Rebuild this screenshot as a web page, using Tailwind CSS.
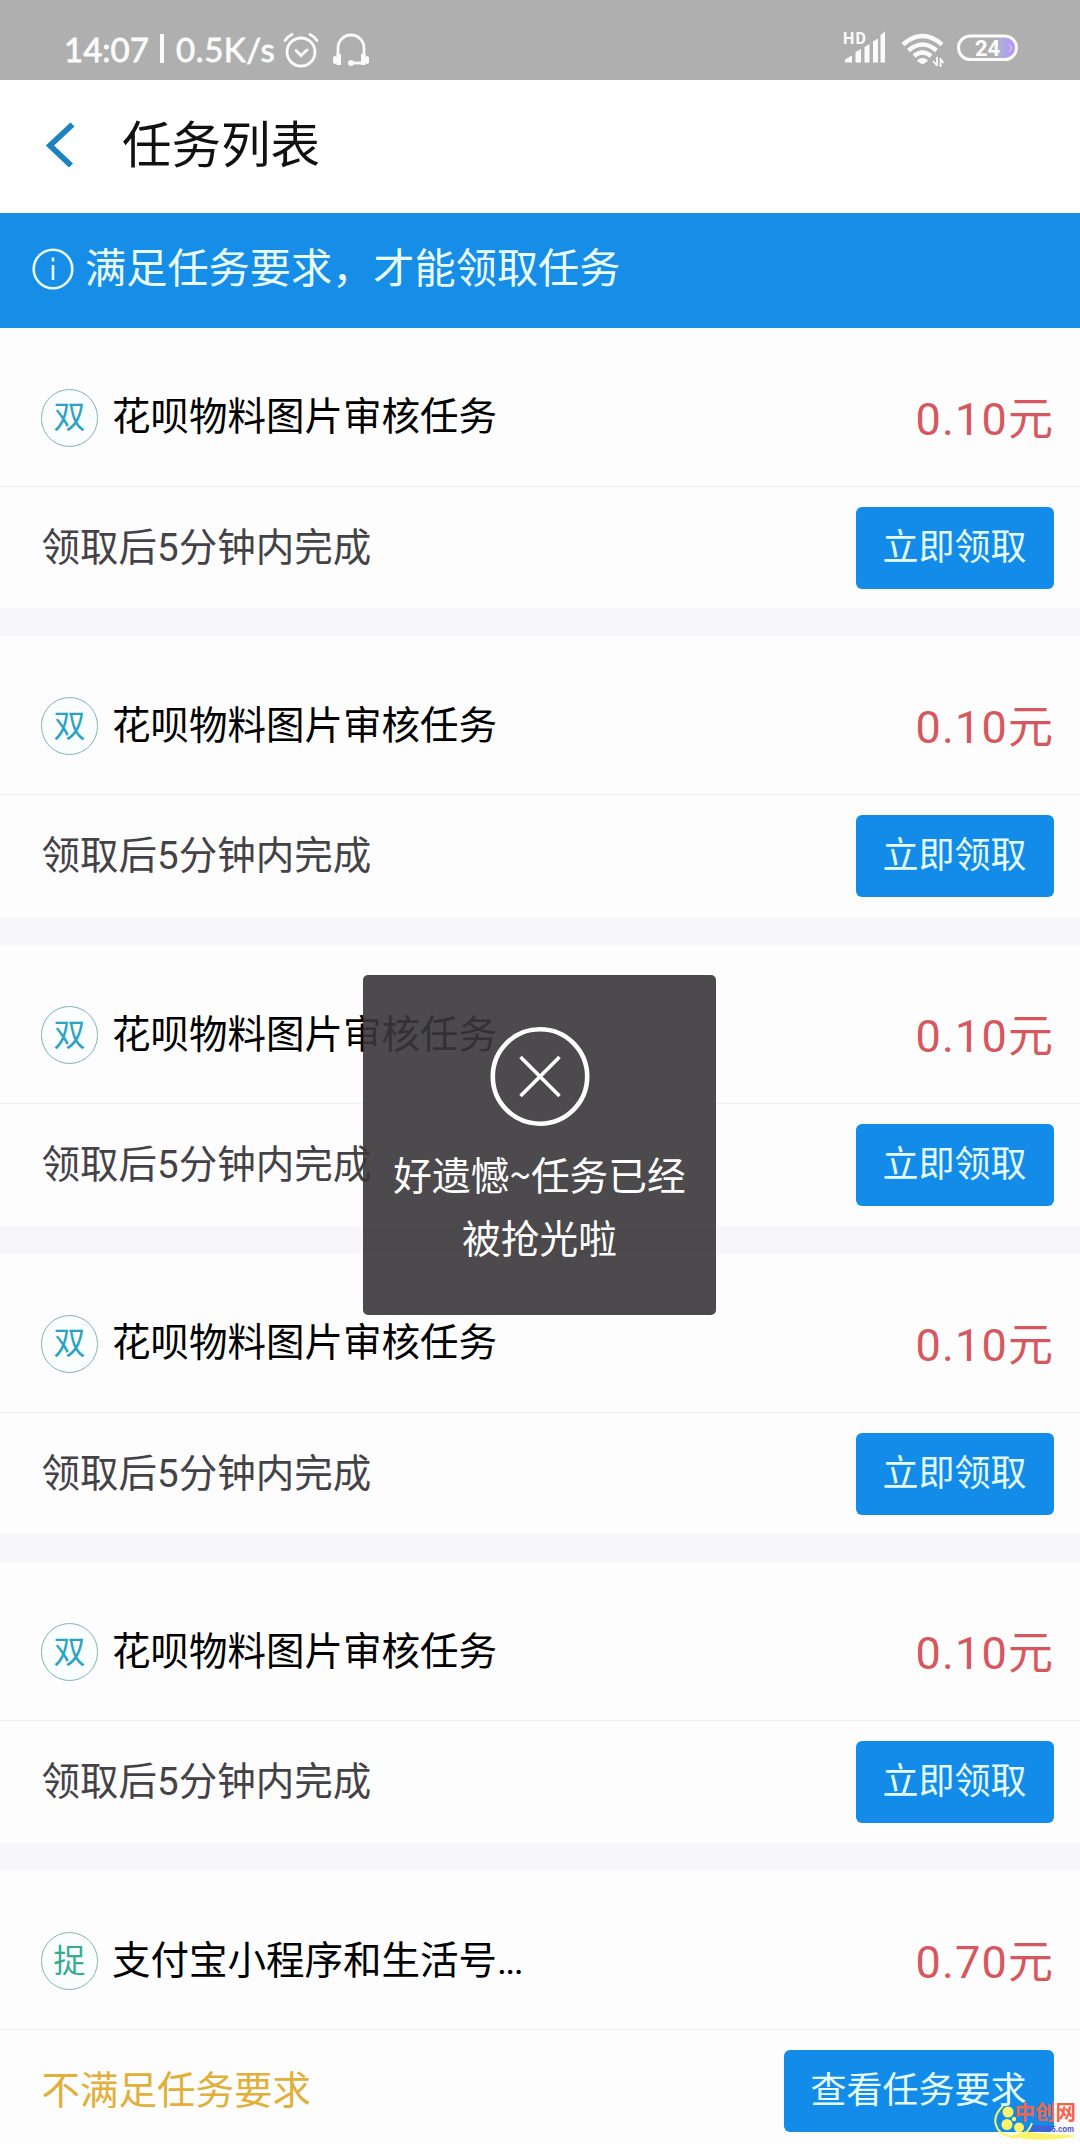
<!DOCTYPE html>
<html lang="zh-CN">
<head>
<meta charset="utf-8">
<title>任务列表</title>
<script src="https://cdn.jsdelivr.net/npm/@tailwindcss/browser@4"></script>
</head>
<body class="bg-[#fdfdfe]">
<div class="relative w-[1080px] h-[2144px] overflow-hidden flex flex-col font-['Roboto','Noto_Sans_CJK_SC',sans-serif]">

  <!-- status bar -->
  <div class="h-20 shrink-0 bg-[#afafaf] flex justify-between pl-[64px] pr-[62px] pt-[18px] text-[#fbfbfb]">
    <div class="flex h-16 items-center pb-[1px]">
      <span class="font-['Lato',sans-serif] text-[33px] leading-[64px] w-[84px] -mt-[2px] whitespace-nowrap [-webkit-text-stroke:0.8px_#fbfbfb]">14:07</span>
      <span class="w-[4px] h-[29px] bg-[#fbfbfb] ml-[12px] mr-[12px] -mt-[2px]"></span>
      <span class="font-['Lato',sans-serif] text-[33px] leading-[64px] w-[100px] -mt-[2px] tracking-[0.600px] whitespace-nowrap [-webkit-text-stroke:0.8px_#fbfbfb]">0.5K/s</span>
      <svg class="w-[36px] h-[36px] ml-[7px]" viewBox="0 0 36 36" fill="none" stroke="currentColor" stroke-width="2.800" stroke-linecap="round">
        <circle cx="18" cy="20" r="14"/><path d="M13 18.500l5 5 6-5.500M2 8.500Q4.500 4.500 9 2.500M34 8.500Q31.500 4.500 27 2.500"/>
      </svg>
      <svg class="w-[38px] h-[36px] ml-[13px]" viewBox="0 0 38 36" fill="none" stroke="currentColor" stroke-width="2.800">
        <path d="M6 24V16a13 13 0 0 1 26 0V24"/><path d="M20 31H31"/>
        <g fill="currentColor" stroke="none"><rect x="4.500" y="22" width="4.500" height="11"/><rect x="1" y="24" width="4" height="8" rx="2"/><rect x="29" y="22" width="4.500" height="11"/><rect x="33" y="24" width="4" height="8" rx="2"/><circle cx="19" cy="31" r="3"/></g>
      </svg>
    </div>
    <svg class="w-[178px] h-[50px]" viewBox="840 18 178 50">
      <defs><linearGradient id="b"><stop offset="0" stop-color="#a9b4dc"/><stop offset="1" stop-color="#b78df5"/></linearGradient></defs>
      <text x="843" y="44" font-family="Roboto" font-weight="700" font-size="16" textLength="23" fill="#fbfbfb">HD</text>
      <g fill="#fbfbfb">
        <path d="M845 62.500v-3l7-4v7zM855.500 62.500V52l5.500-3v13.500zM864.500 62.500V47l5-3v18.500zM873 62.500V41.500l5-3v24zM880.500 62.500V35l4.500-3.500v31z"/>
        <path d="M922.500 64.500l-5.500-3.500a6 5 0 0 1 11 0z"/>
      </g>
      <g fill="none" stroke="#fbfbfb" stroke-width="4.400">
        <path d="M903 44.500Q922.500 27.500 942 44.500M908.500 50.500Q922.500 38.500 936.500 50.500M914 56Q922.500 49 931 56"/>
        <path stroke-width="1.800" d="M937 57v9M933 61l4 4.500M940.500 67v-9M940.500 59l3 4"/>
      </g>
      <path d="M999 37h6a11 11 0 0 1 0 22h-6z" fill="url(#b)"/>
      <path d="M1009 44l3 4-3 4" fill="none" stroke="#d6b8fa" stroke-width="1.500"/>
      <rect x="958.500" y="36" width="58" height="23.500" rx="11.700" fill="none" stroke="#fbfbfb" stroke-width="3"/>
      <text x="975" y="56" font-family="Roboto" font-weight="700" font-size="22" fill="#fff">24</text>
    </svg>
  </div>

  <!-- title bar -->
  <div class="h-[132.700px] shrink-0 bg-white flex items-center pl-[45px]">
    <svg class="w-[30px] h-[44px] -mt-[2px]" viewBox="0 0 30 44" fill="none" stroke="#1c83c0" stroke-width="5.800"><path d="M27.500 1.500L5 22.500 26 42.500"/></svg>
    <h1 class="ml-[47px] -mt-[1px] text-[49.500px] leading-[60px] text-[#111114]">任务列表</h1>
  </div>

  <!-- notice -->
  <div class="h-[115px] shrink-0 bg-[#168de7] flex items-center pl-[32px] text-[#e9fdff]">
    <svg class="w-[42px] h-[42px] -mt-[2px]" viewBox="0 0 42 42" fill="none" stroke="currentColor" stroke-width="2.600"><circle cx="21" cy="21" r="19.300"/><path d="M21 17v15M21 9.500v4"/></svg>
    <p class="ml-[11px] -mt-[3px] text-[41.200px] leading-[56px] whitespace-nowrap">满足任务要求，才能领取任务</p>
  </div>

  <div id="list"></div>

  <!-- toast -->
  <div class="absolute left-[363px] top-[975px] w-[353px] h-[340px] rounded-[5px] bg-[#383639]/90 flex flex-col items-center pt-[51px] text-white">
    <svg class="w-[100px] h-[100px] shrink-0" viewBox="0 0 100 100" fill="none" stroke="currentColor"><circle cx="50" cy="50.500" r="47.200" stroke-width="4.600"/><path stroke-width="3.600" d="M30.500 31l39 39M69.500 31l-39 39"/></svg>
    <p class="mt-[16px] text-[38.700px] leading-[62.500px] text-center whitespace-nowrap font-['Noto_Sans_CJK_SC',sans-serif]">好遗憾~任务已经<br>被抢光啦</p>
  </div>

  <!-- site mark -->
  <svg class="absolute left-[990px] top-[2096px] w-[90px] h-[48px]" viewBox="990 2096 90 48">
    <path d="M1003 2106C990 2118 994 2134 1012 2137C1020 2138.500 1028 2134 1032 2123" fill="none" stroke="#fbf36a" stroke-width="2"/>
    <path d="M1012 2136Q1040 2142 1074 2136Q1040 2135 1024 2132" fill="#fbf36a" stroke="#fbf36a" stroke-width="1.500"/>
    <g fill="#fbf36a"><circle cx="1008" cy="2112" r="5.500"/><circle cx="1007" cy="2124.500" r="5.500"/><circle cx="1019" cy="2127.500" r="5"/><circle cx="1014" cy="2119" r="2.200"/></g>
    <text x="1014.500" y="2119.500" font-family="Noto Sans CJK SC" font-weight="700" font-size="20.500" fill="#f4644a">中创网</text>
    <path d="M1033 2125.500h17l-2 6h-18z" fill="#4263d8"/>
    <text x="1047" y="2131.500" font-family="Liberation Sans" font-weight="700" font-size="8.200" textLength="27" lengthAdjust="spacingAndGlyphs" fill="#4a4fd0">65.com</text>
  </svg>
</div>

<script>
const task = { tag: '双', tagClass: 'text-[#2ba3c4] border-[#7fb4bb]', title: '花呗物料图片审核任务', price: '0.10', note: '领取后5分钟内完成', noteClass: 'text-[#444246]', action: '立即领取', actionClass: 'w-[198px]' };
const tasks = [task, task, task, task, task, { tag: '捉', tagClass: 'text-[#35ac92] border-[#84b8ab]', title: '支付宝小程序和生活号<span class="tracking-[-1.800px]">...</span>', price: '0.70', note: '不满足任务要求', noteClass: 'text-[#e0b03a]', action: '查看任务要求', actionClass: 'w-[270px]' }];
document.getElementById('list').innerHTML = tasks.map(t => `
  <section class="h-[308.700px] border-b-[28px] border-[#f7f6f9] flex flex-col">
    <div class="h-[159px] shrink-0 border-b-[1.500px] border-[#efeef3] flex items-center pt-[22px] pl-[41px] pr-[27px]">
      <span class="w-[57px] h-[58px] rounded-full border-[1.500px] flex items-center justify-center bg-[#fafefe] text-[32px] leading-[40px] pb-[1px] ${t.tagClass}">${t.tag}</span>
      <span class="ml-[14px] -mt-[1px] text-[38.500px] leading-[56px] text-black whitespace-nowrap">${t.title}</span>
      <span class="ml-auto mt-[4px] text-[#d6575d] text-[45px] leading-[56px] whitespace-nowrap"><span class="tracking-[1.200px]">${t.price}</span>元</span>
    </div>
    <div class="flex-1 flex items-center justify-between pl-[41.500px] pr-[26.500px]">
      <span class="text-[38.500px] leading-[56px] whitespace-nowrap ${t.noteClass}">${t.note}</span>
      <span class="h-[82px] rounded-[6px] bg-[#128ce8] text-[#e4fbff] text-[36px] leading-[82px] text-center whitespace-nowrap ${t.actionClass}">${t.action}</span>
    </div>
  </section>`).join('');
</script>
</body>
</html>
